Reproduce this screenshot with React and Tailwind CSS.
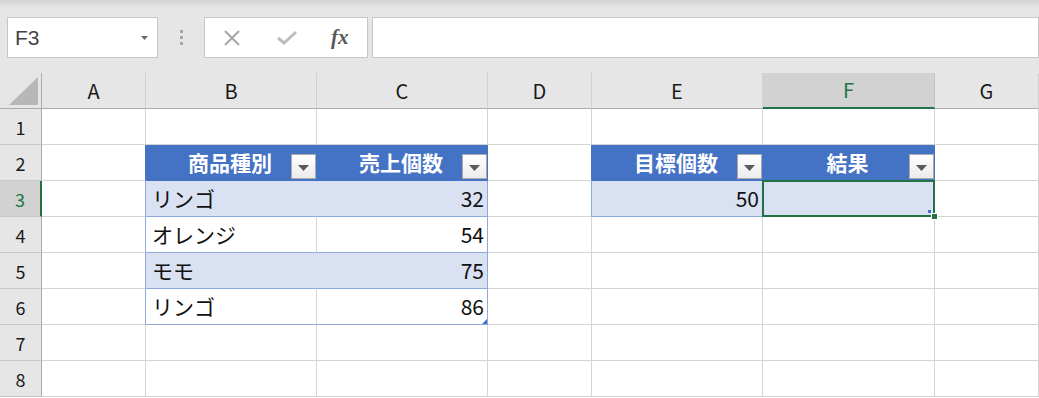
import React from 'react';

// colours used by the sheet
const GRID = 'border-r border-b border-r-[#d4d4d4] border-b-[#d4d4d4]';
const COLS = ['A', 'B', 'C', 'D', 'E', 'F', 'G'];

const Dropdown = () => (
    <div className="absolute right-0 top-[9px] w-[25px] h-[25px] border border-[#a9a9a9] bg-gradient-to-b from-[#ffffff] to-[#ececec] flex items-center justify-center">
        <svg width="11" height="6" viewBox="0 0 11 6" className="mt-[2px]">
            <polygon points="0,0 11,0 5.5,6" fill="#595959" />
        </svg>
    </div>
);

const HeaderCell = ({ text, border }) => (
    <div className={`relative bg-[#4472c4] text-white font-bold text-[21px] leading-none flex items-center justify-center ${border}`}>
        <span className="pr-[2px]">{text}</span>
        <Dropdown />
    </div>
);

const TextCell = ({ text, cls, right }) => (
    <div className={`text-[21px] leading-none text-[#111] flex items-center ${right ? 'justify-end pr-[3px]' : 'pl-[6px]'} ${cls}`}>
        {text}
    </div>
);

const App = () => {
    // one entry per row, one class string per column A..G
    const rows = [
        { n: 1, cells: [GRID, GRID, GRID, GRID, GRID, GRID, GRID] },
        { n: 2 },
        { n: 3 },
        { n: 4 },
        { n: 5 },
        { n: 6 },
        { n: 7, cells: [GRID, GRID, GRID, GRID, GRID, GRID, GRID] },
        { n: 8, cells: [GRID, GRID, GRID, GRID, GRID, GRID, GRID] },
    ];

    const band = 'bg-[#d9e1f2] border-r border-b border-r-[#d9e1f2] border-b-[#8ea9db]';
    const bandEnd = 'bg-[#d9e1f2] border-r border-b border-r-[#8ea9db] border-b-[#8ea9db]';
    const plain = 'border-r border-b border-r-[#d4d4d4] border-b-[#8ea9db]';
    const plainEnd = 'border-r border-b border-r-[#8ea9db] border-b-[#8ea9db]';
    const leftEdge = 'border-r border-b border-r-[#8ea9db] border-b-[#d4d4d4]';

    const renderRow = (r) => {
        if (r.n === 2) {
            return [
                <div key="a" className="border-r border-b border-r-[#4472c4] border-b-[#d4d4d4]" />,
                <HeaderCell key="b" text="商品種別" border="border-r border-b border-r-[#4472c4] border-b-[#4472c4]" />,
                <HeaderCell key="c" text="売上個数" border="border-r border-b border-r-[#4472c4] border-b-[#4472c4]" />,
                <div key="d" className="border-r border-b border-r-[#4472c4] border-b-[#d4d4d4]" />,
                <HeaderCell key="e" text="目標個数" border="border-r border-b border-r-[#4472c4] border-b-[#4472c4]" />,
                <HeaderCell key="f" text="結果" border="border-r border-b border-r-[#4472c4] border-b-[#4472c4]" />,
                <div key="g" className={GRID} />,
            ];
        }
        if (r.n === 3) {
            return [
                <div key="a" className={leftEdge} />,
                <TextCell key="b" text="リンゴ" cls={band} />,
                <TextCell key="c" text="32" cls={bandEnd} right />,
                <div key="d" className={leftEdge} />,
                <TextCell key="e" text="50" cls={band} right />,
                <div key="f" className={`relative ${bandEnd}`}>
                    <div className="absolute -left-px -top-px -right-px -bottom-px border-2 border-[#217346]" />
                    <div className="absolute right-[3px] bottom-[3px] w-[3px] h-[3px] bg-[#4472c4]" />
                    <div className="absolute -right-[4px] -bottom-[4px] w-[7px] h-[7px] bg-[#217346] border border-white" />
                </div>,
                <div key="g" className={GRID} />,
            ];
        }
        const data = { 4: ['オレンジ', '54'], 5: ['モモ', '75'], 6: ['リンゴ', '86'] };
        const [name, num] = data[r.n];
        const banded = r.n === 5;
        return [
            <div key="a" className={leftEdge} />,
            <TextCell key="b" text={name} cls={banded ? band : plain} />,
            <div key="c" className="relative flex">
                <TextCell text={num} cls={`flex-1 ${banded ? bandEnd : plainEnd}`} right />
                {r.n === 6 && (
                    <svg width="5" height="5" viewBox="0 0 5 5" className="absolute right-[1px] bottom-[1px]">
                        <polygon points="5,0 5,5 0,5" fill="#4472c4" />
                    </svg>
                )}
            </div>,
            <div key="d" className={GRID} />,
            <div key="e" className={GRID} />,
            <div key="f" className={GRID} />,
            <div key="g" className={GRID} />,
        ];
    };

    return (
        <div className="w-[1039px] h-[398px] overflow-hidden bg-white font-['Noto_Sans_CJK_JP','Noto_Sans',sans-serif] select-none">
            {/* --- formula bar --- */}
            <div className="h-[73px] bg-[#e6e6e6]">
                <div className="h-[7px] bg-gradient-to-b from-[#d3d1d1] to-[#e4e4e4]" />
                <div className="flex items-start mt-[10px] h-[41px]">
                    <div className="ml-[7px] w-[151px] h-[41px] bg-white border border-[#c6c6c6] flex items-center justify-between pl-[7px] pr-[9px]">
                        <span className="font-['Liberation_Sans',sans-serif] text-[21px] text-[#444] leading-none">F3</span>
                        <svg width="7" height="4" viewBox="0 0 7 4">
                            <polygon points="0,0 7,0 3.5,4" fill="#6b6b6b" />
                        </svg>
                    </div>
                    <div className="w-[46px] h-[41px] flex flex-col items-center justify-center gap-[3px]">
                        <div className="w-[3px] h-[3px] bg-[#a6a6a6]" />
                        <div className="w-[3px] h-[3px] bg-[#a6a6a6]" />
                        <div className="w-[3px] h-[3px] bg-[#a6a6a6]" />
                    </div>
                    <div className="w-[164px] h-[41px] bg-white border border-[#c6c6c6] flex items-center">
                        <svg width="18" height="16" viewBox="0 0 18 16" className="ml-[18px]">
                            <path d="M2 1 L16 15 M16 1 L2 15" stroke="#a6a6a6" strokeWidth="2" fill="none" />
                        </svg>
                        <svg width="20" height="15" viewBox="0 0 20 15" className="ml-[36px]">
                            <path d="M1 8 L7 13 L19 2" stroke="#bdbdbd" strokeWidth="3" fill="none" />
                        </svg>
                        <span className="ml-[34px] font-['Liberation_Serif',serif] italic font-bold text-[21px] text-[#595959] leading-none">fx</span>
                    </div>
                    <div className="ml-[4px] flex-1 h-[41px] bg-white border border-[#c6c6c6]" />
                </div>
            </div>

            {/* --- sheet --- */}
            <div className="grid grid-cols-[42px_104px_171px_171px_104px_171px_172px_104px] grid-rows-[36px_repeat(8,36px)]">
                {/* corner */}
                <div className="bg-[#e6e6e6] border-r border-b border-[#ababab] flex items-end justify-end pr-[3px] pb-[3px]">
                    <svg width="29" height="28" viewBox="0 0 29 28">
                        <polygon points="29,0 29,28 0,28" fill="#b7b7b7" />
                    </svg>
                </div>
                {COLS.map((c) =>
                    c === 'F' ? (
                        <div key={c} className="bg-[#d2d2d2] border-r border-r-[#c6c6c6] border-b-2 border-b-[#217346] text-[#217346] text-[20px] leading-none flex items-center justify-center">
                            {c}
                        </div>
                    ) : (
                        <div key={c} className="bg-[#e6e6e6] border-r border-b border-r-[#d0d0d0] border-b-[#ababab] text-[#1a1a1a] text-[20px] leading-none flex items-center justify-center">
                            {c}
                        </div>
                    )
                )}

                {rows.map((r) => (
                    <React.Fragment key={r.n}>
                        {r.n === 3 ? (
                            <div className="bg-[#d2d2d2] border-r-2 border-r-[#217346] border-b border-b-[#c6c6c6] text-[#217346] text-[18px] leading-none flex items-center justify-center">
                                {r.n}
                            </div>
                        ) : (
                            <div className="bg-[#e6e6e6] border-r border-b border-r-[#ababab] border-b-[#c6c6c6] text-[#1a1a1a] text-[18px] leading-none flex items-center justify-center">
                                {r.n}
                            </div>
                        )}
                        {r.cells ? r.cells.map((cls, i) => <div key={i} className={cls} />) : renderRow(r)}
                    </React.Fragment>
                ))}
            </div>
        </div>
    );
};

export default App;
